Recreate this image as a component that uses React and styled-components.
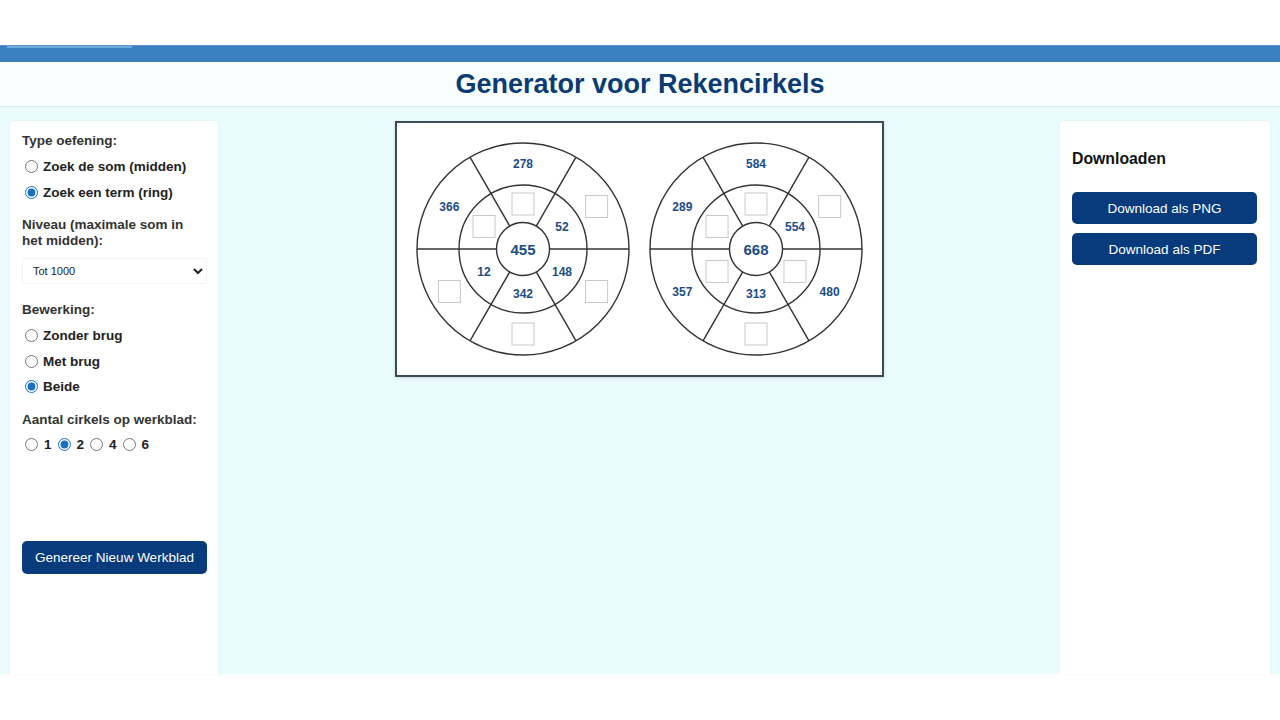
import React from 'react';
import styled, { createGlobalStyle } from 'styled-components';

const NAVY = '#073b7b';
const NUMBER_BLUE = '#1b4d86';

const GlobalStyle = createGlobalStyle`
    html, body {
        margin: 0;
        padding: 0;
        background: #ffffff;
        font-family: "Liberation Sans", Arial, sans-serif;
        color: #222;
    }
`;

const ANGLES = [30, 90, 150, 210, 270, 330];
const SIZE = 216;
const C = SIZE / 2;
const R_OUTER = 106;
const R_MIDDLE = 64;
const R_INNER = 26.5;

const worksheet = [
    {
        center: 455,
        outer: [null, 278, 366, null, null, null],
        inner: [52, null, null, 12, 342, 148],
    },
    {
        center: 668,
        outer: [null, 584, 289, 357, null, 480],
        inner: [554, null, null, null, 313, null],
    },
];

const polar = (r, deg) => {
    const a = (deg * Math.PI) / 180;
    return [C + r * Math.cos(a), C - r * Math.sin(a)];
};

const Cell = ({ value, r, angle }) => {
    const [x, y] = polar(r, angle);
    if (value === null) {
        return <AnswerBox x={x - 11} y={y - 11} width="22" height="22" />;
    }
    return (
        <RingNumber x={x} y={y} textAnchor="middle" dominantBaseline="central">
            {value}
        </RingNumber>
    );
};

const RekenCirkel = ({ center, outer, inner }) => (
    <svg width={SIZE} height={SIZE} viewBox={`0 0 ${SIZE} ${SIZE}`}>
        {[0, 60, 120, 180, 240, 300].map(deg => {
            const [x1, y1] = polar(R_INNER, deg);
            const [x2, y2] = polar(R_OUTER, deg);
            return <Stroke key={deg} as="line" x1={x1} y1={y1} x2={x2} y2={y2} />;
        })}
        <Stroke cx={C} cy={C} r={R_OUTER} />
        <Stroke cx={C} cy={C} r={R_MIDDLE} />
        <Stroke cx={C} cy={C} r={R_INNER} fill="#fff" />
        {ANGLES.map((deg, i) => (
            <Cell key={`o${deg}`} value={outer[i]} r={85} angle={deg} />
        ))}
        {ANGLES.map((deg, i) => (
            <Cell key={`i${deg}`} value={inner[i]} r={45} angle={deg} />
        ))}
        <CenterNumber x={C} y={C} textAnchor="middle" dominantBaseline="central">
            {center}
        </CenterNumber>
    </svg>
);

const RadioOption = ({ name, label, checked }) => (
    <RadioRow>
        <Radio type="radio" name={name} defaultChecked={checked} />
        {label}
    </RadioRow>
);

const App = () => (
    <>
        <GlobalStyle />
        <Page>
            <TopStrip />
            <BlueBar>
                <BarTab />
            </BlueBar>
            <Header>
                <Title>Generator voor Rekencirkels</Title>
            </Header>
            <Main>
                <SidePanel>
                    <Group>
                        <Label>Type oefening:</Label>
                        <RadioOption name="type" label="Zoek de som (midden)" />
                        <RadioOption name="type" label="Zoek een term (ring)" checked />
                    </Group>
                    <Group>
                        <Label>Niveau (maximale som in het midden):</Label>
                        <Select defaultValue="1000">
                            <option value="20">Tot 20</option>
                            <option value="100">Tot 100</option>
                            <option value="1000">Tot 1000</option>
                        </Select>
                    </Group>
                    <Group>
                        <Label>Bewerking:</Label>
                        <RadioOption name="brug" label="Zonder brug" />
                        <RadioOption name="brug" label="Met brug" />
                        <RadioOption name="brug" label="Beide" checked />
                    </Group>
                    <Group>
                        <Label>Aantal cirkels op werkblad:</Label>
                        <InlineRadios>
                            {[1, 2, 4, 6].map(n => (
                                <InlineItem key={n}>
                                    <Radio type="radio" name="aantal" defaultChecked={n === 2} />
                                    {n}
                                </InlineItem>
                            ))}
                        </InlineRadios>
                    </Group>
                    <GenerateButton>Genereer Nieuw Werkblad</GenerateButton>
                </SidePanel>

                <Stage>
                    <Sheet>
                        {worksheet.map(c => (
                            <RekenCirkel key={c.center} {...c} />
                        ))}
                    </Sheet>
                </Stage>

                <SidePanel>
                    <PanelHeading>Downloaden</PanelHeading>
                    <ButtonStack>
                        <ActionButton>Download als PNG</ActionButton>
                        <ActionButton>Download als PDF</ActionButton>
                    </ButtonStack>
                </SidePanel>
            </Main>
        </Page>
    </>
);

export default App;

const Page = styled.div`
    width: 1280px;
    height: 720px;
    display: flex;
    flex-direction: column;
    background: #ffffff;
`;

const TopStrip = styled.div`
    height: 45px;
    background: #ffffff;
`;

const BlueBar = styled.div`
    height: 17px;
    background: #3a7fc0;
    border-top: 1px solid #5c95cc;
    box-sizing: border-box;
    padding-left: 7px;
`;

const BarTab = styled.div`
    width: 125px;
    height: 2px;
    background: #6fa8dc;
`;

const Header = styled.header`
    height: 45px;
    display: flex;
    align-items: center;
    justify-content: center;
    background: #f8fefe;
    border-bottom: 1px solid #d3eff2;
    box-sizing: border-box;
`;

const Title = styled.h1`
    margin: 0;
    font-size: 27px;
    font-weight: 700;
    color: #0b3b72;
`;

const Main = styled.main`
    height: 567px;
    box-sizing: border-box;
    padding: 14px 10px 0;
    display: grid;
    grid-template-columns: 208px 1fr 210px;
    align-items: stretch;
    background: #eafcfd;
`;

const SidePanel = styled.aside`
    background: #ffffff;
    padding: 12px 12px 0;
    border-radius: 4px 4px 0 0;
    box-shadow: 0 0 3px rgba(0, 60, 80, 0.06);
    display: flex;
    flex-direction: column;
`;

const Group = styled.div`
    margin-bottom: 12px;
`;

const Label = styled.div`
    font-size: 13.5px;
    line-height: 16px;
    font-weight: 700;
    color: #333;
    margin-bottom: 5px;
`;

const RadioRow = styled.label`
    display: flex;
    align-items: center;
    height: 25.5px;
    font-size: 13.5px;
    font-weight: 700;
    color: #222;
`;

const Radio = styled.input`
    width: 13px;
    height: 13px;
    margin: 0 5px 0 3px;
    accent-color: #1a6fc2;
`;

const Select = styled.select`
    display: block;
    width: 185px;
    height: 26px;
    margin: 9px 0 6px;
    padding: 0 6px;
    font-family: "Liberation Sans", Arial, sans-serif;
    font-size: 11px;
    color: #222;
    background: #ffffff;
    border: 1px solid #f3f5f5;
    border-radius: 2px;
`;

const InlineRadios = styled.div`
    display: flex;
    align-items: center;
    height: 25.5px;
    margin-top: -1px;
`;

const InlineItem = styled.label`
    display: flex;
    align-items: center;
    margin-right: 3px;
    font-size: 13.5px;
    font-weight: 700;
    color: #222;

    & > input {
        margin-right: 6px;
    }
`;

const ButtonBase = styled.button`
    width: 185px;
    border: none;
    border-radius: 5px;
    background: ${NAVY};
    color: #ffffff;
    font-family: "Liberation Sans", Arial, sans-serif;
    font-size: 13.5px;
    cursor: pointer;
`;

const GenerateButton = styled(ButtonBase)`
    height: 33px;
    margin-top: 72px;
`;

const PanelHeading = styled.h3`
    margin: 15.5px 0 24.5px;
    font-size: 15.8px;
    line-height: 19px;
    font-weight: 700;
    color: #111;
`;

const ButtonStack = styled.div`
    display: flex;
    flex-direction: column;
    gap: 9px;
`;

const ActionButton = styled(ButtonBase)`
    height: 32px;
`;

const Stage = styled.section`
    display: flex;
    justify-content: center;
    align-items: flex-start;
`;

const Sheet = styled.div`
    display: flex;
    gap: 17px;
    padding: 18px;
    background: #ffffff;
    border: 2px solid #3c4a56;
    box-shadow: 0 1px 3px rgba(0, 0, 0, 0.15);

    & > svg {
        display: block;
    }
`;

const Stroke = styled.circle`
    fill: ${props => props.fill || 'none'};
    stroke: #333;
    stroke-width: 1.4;
`;

const AnswerBox = styled.rect`
    fill: #ffffff;
    stroke: #c9c9c9;
    stroke-width: 1;
`;

const RingNumber = styled.text`
    font-family: "Liberation Sans", Arial, sans-serif;
    font-size: 12px;
    font-weight: 700;
    fill: ${NUMBER_BLUE};
`;

const CenterNumber = styled(RingNumber)`
    font-size: 15px;
`;
